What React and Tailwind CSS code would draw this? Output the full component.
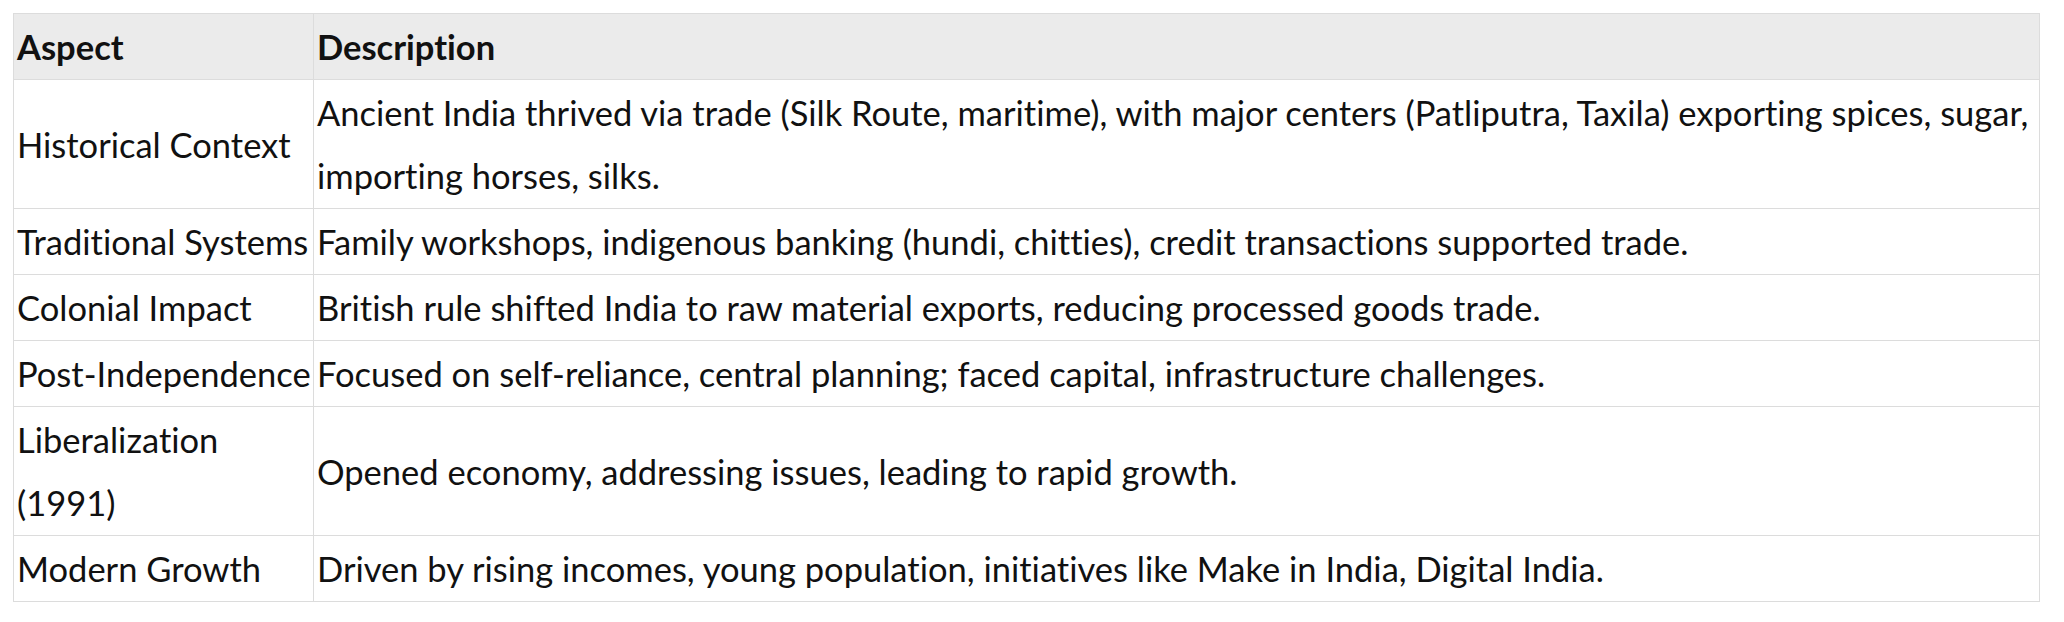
export default function App() {
  const rows = [
    ["Historical Context", "Ancient India thrived via trade (Silk Route, maritime), with major centers (Patliputra, Taxila) exporting spices, sugar, importing horses, silks.", true],
    ["Traditional Systems", "Family workshops, indigenous banking (hundi, chitties), credit transactions supported trade.", true],
    ["Colonial Impact", "British rule shifted India to raw material exports, reducing processed goods trade.", true],
    ["Post-Independence", "Focused on self-reliance, central planning; faced capital, infrastructure challenges.", true],
    ["Liberalization (1991)", "Opened economy, addressing issues, leading to rapid growth.", false],
    ["Modern Growth", "Driven by rising incomes, young population, initiatives like Make in India, Digital India.", true],
  ];
  return (
    <div className="bg-white min-h-[622px] pt-[13px] pl-[13px] pr-[24px]" style={{ fontFamily: "Lato, 'Noto Sans', sans-serif" }}>
      <table className="w-[2027px] border-collapse table-fixed text-[34.5px] leading-[63px] text-[#111] [font-variant-ligatures:none]">
        <colgroup>
          <col className="w-[300px]" />
          <col />
        </colgroup>
        <thead>
          <tr className="bg-[#ebebeb]">
            <th className="border border-[#dcdcdc] text-left font-bold px-[3px] py-[1px] align-middle">Aspect</th>
            <th className="border border-[#dcdcdc] text-left font-bold px-[3px] py-[1px] align-middle">Description</th>
          </tr>
        </thead>
        <tbody>
          {rows.map(([a, d, nw]) => (
            <tr key={a}>
              <td className={nw ? "border border-[#dcdcdc] px-[3px] py-[1px] align-middle whitespace-nowrap" : "border border-[#dcdcdc] px-[3px] py-[1px] align-middle"}>{a}</td>
              <td className="border border-[#dcdcdc] px-[3px] py-[1px] align-middle">{d}</td>
            </tr>
          ))}
        </tbody>
      </table>
    </div>
  );
}
